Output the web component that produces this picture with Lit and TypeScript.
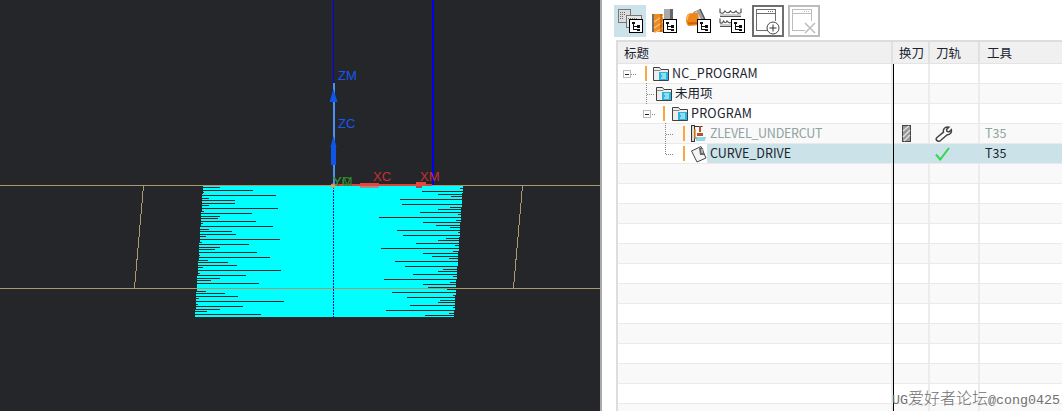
import { LitElement, html, css, svg } from "lit";
import { customElement } from "lit/decorators.js";

const leftLines: [number, number][] = [[37,270],[46,369],[51,222],[61,438],[70,237],[76,315],[85,315],[91,237],[100,444],[109,222],[115,366],[124,270],[130,264],[139,378],[145,219],[154,429],[163,237],[169,306],[178,318],[184,228],[193,450],[202,216],[208,357],[217,270],[223,255],[232,381],[241,210],[247,420],[256,234],[262,294],[271,321],[277,219],[286,453],[295,210],[301,348],[310,270],[316,243],[325,387],[349,228],[355,285],[364,324],[370,207],[379,462],[388,204],[394,339],[403,270],[409,231],[418,393]];
const rightLines: [number, number][] = [[40,390],[49,276],[58,324],[64,363],[73,210],[88,216],[97,360],[103,324],[112,270],[118,384],[127,147],[136,378],[142,279],[151,318],[157,360],[166,201],[172,384],[181,219],[190,348],[196,324],[205,258],[211,375],[220,153],[229,369],[235,279],[244,306],[250,357],[259,195],[274,225],[283,339],[289,324],[298,249],[304,369],[313,162],[322,360],[328,279],[337,294],[343,351],[352,186],[361,369],[367,231],[376,330],[382,324],[391,240],[397,369],[406,168],[415,357],[421,285]];

const leftEdge = (y: number) => Math.floor(203 - ((y - 186) * 8.5) / 131);
const rightEdge = (y: number) => Math.ceil(463 - ((y - 186) * 9) / 131);

const scan = svg`
  ${leftLines.map(([zy, zx]) => {
    const y = 175 + Math.round(zy / 3);
    const x0 = leftEdge(y);
    return svg`<rect x=${x0} y=${y} width=${130 + zx / 3 - x0} height="1" fill="#2b2528"/>`;
  })}
  ${rightLines.map(([zy, zx]) => {
    const y = 175 + Math.round(zy / 3);
    const x0 = 330 + zx / 3;
    return svg`<rect x=${x0} y=${y} width=${rightEdge(y) - x0} height="1" fill="#2b2528"/>`;
  })}
`;

const viewport = html`<svg class="scene" width="600" height="411" viewBox="0 0 600 411">
  <g shape-rendering="crispEdges">
    <polygon points="203,186 463,186 454,317 195,317" fill="#00ffff"/>
    ${scan}
    <rect x="0" y="185" width="600" height="1" fill="#a89a6e"/>
    <rect x="0" y="288" width="600" height="1" fill="#a89a6e"/>
    <line x1="143.5" y1="186" x2="134.5" y2="288" stroke="#a89a6e"/>
    <line x1="522.5" y1="186" x2="513.5" y2="288" stroke="#a89a6e"/>
    <line x1="333.5" y1="187" x2="333.5" y2="317" stroke="#0000e0" stroke-dasharray="2 1"/>
    <rect x="432" y="0" width="2" height="185" fill="#0000f0"/>
    <rect x="333" y="0" width="1" height="83" fill="#0000ff"/>
    <rect x="333" y="83" width="2" height="102" fill="#4a8ff2"/>
    <rect x="331" y="145" width="5" height="20" fill="#0f55e8"/>
    <rect x="333" y="184" width="99" height="2" fill="#d64538"/>
    <rect x="360" y="186" width="19" height="2" fill="#b08a8a"/>
    <rect x="360" y="183" width="19" height="3" fill="#e0483f"/>
    <rect x="416" y="186" width="6" height="2" fill="#b04a44"/>
    <rect x="416" y="182" width="10" height="4" fill="#e24840"/>
  </g>
  <polygon points="333.5,89 337.500,102 329.500,102" fill="#0f55e8"/>
  <polygon points="333.5,136 336.500,147 330.500,147" fill="#0f55e8"/>
  <text class="axis" x="338" y="80" fill="#1558f0">ZM</text>
  <text class="axis" x="338" y="128" fill="#1558f0">ZC</text>
  <text class="axis" x="373" y="181" fill="#c83030">XC</text>
  <text class="axis" x="420" y="181" fill="#c83030">XM</text>
  <text class="axis" x="333" y="186" fill="#2f8a30">YM</text>
  <text class="axis" x="333" y="186" fill="#2f8a30">YC</text>
  <circle cx="333" cy="186" r="2.500" fill="#b9b56a" opacity=".85"/>
</svg>`;

const badge = svg`<g shape-rendering="crispEdges">
  <rect x="15.500" y="14.500" width="13" height="13" fill="#fff" stroke="#000" stroke-width="1.300"/>
  <path d="M19.500 18v7M19.500 21.500h4M19.500 24.500h4" stroke="#111" fill="none"/>
  <rect x="18" y="17" width="3" height="2" fill="#111"/>
  <rect x="23" y="20" width="3" height="3" fill="#111"/>
  <rect x="23" y="23.500" width="3" height="2.500" fill="#111"/>
</g>`;

const icon = (body: unknown, w = 32) => html`<svg width=${w} height="32" viewBox="0 0 32 32">${body}</svg>`;

const ico1 = icon(svg`
  <g shape-rendering="crispEdges">
    <rect x="4.500" y="4.500" width="12" height="13" fill="#dcdcdc" stroke="#777"/>
    <path d="M6 7h1M8 7h1M10 7h1M6 9h1M8 9h1M10 9h1M6 11h1M8 11h1M6 13h1M8 13h1" stroke="#666"/>
    <rect x="12.500" y="10.500" width="15" height="12" fill="#e6e6e6" stroke="#777"/>
    <path d="M14 13h9" stroke="#777" stroke-dasharray="1 1"/>
  </g>${badge}`);

const ico2 = icon(svg`
  <rect x="16" y="4" width="9" height="11" fill="#a8a8a8"/>
  <rect x="22" y="4" width="3" height="10" fill="#666"/>
  <rect x="4" y="9" width="11" height="18" fill="#ef8a1d"/>
  <rect x="4" y="9" width="2" height="18" fill="#7a6f66"/>
  <path d="M6 17l9-6M6 23l9-6M6 28l9-5" stroke="#f7c58a" stroke-width="1.200" fill="none"/>
  <path d="M13 9v18" stroke="#c8600a" stroke-width="1.500"/>
  ${badge}`);

const ico3 = icon(svg`
  <path d="M11 7l7-3 6 14-4 7z" fill="#a0a0a0"/>
  <path d="M18 4l6.500 14-4 7" fill="none" stroke="#555" stroke-width="1.500"/>
  <path d="M14 7l6 12" stroke="#e6e6e6" stroke-width="2"/>
  <path d="M7.500 8.500L16 7.500 17.500 20 7.500 21C3 21 3 8.500 7.500 8.500z" fill="#f08518"/>
  <path d="M7 9.500C5.500 11 5 13.500 5.200 15" fill="none" stroke="#fbb566" stroke-width="1.500"/>
  <path d="M6 18.500l10-.5" stroke="#c8650c" stroke-width="2"/>
  ${badge}`);

const ico4 = icon(svg`
  <rect x="4" y="9" width="21" height="2" fill="#ccc"/>
  <path d="M4 3.500v4q3 2 5 -1.500q2.500 3.500 5.500 0q2.500 3.500 5.500 0q2 3.500 5 1.500v-4" fill="none" stroke="#555" stroke-width="1.200"/>
  <path d="M4 11.500h21" stroke="#555"/>
  <rect x="4" y="19" width="11" height="2" fill="#ccc"/>
  <path d="M4 13.500v4q2 2 3.500 -1.500q2 3.500 3.500 0q1.500 2.500 4 1.500" fill="none" stroke="#555" stroke-width="1.200"/>
  <path d="M4 21.500h11" stroke="#555"/>
  ${badge}`);

const windowIcon = (c: string, extra: unknown) => icon(svg`
  <rect x="1" y="1" width="30" height="30" fill="none" stroke=${c} stroke-width="2" shape-rendering="crispEdges"/>
  <g shape-rendering="crispEdges" fill="none" stroke=${c}>
    <path d="M16.500 25.500H4.500V4.500H23.500V15.500"/>
    <path d="M5 8.500H23"/>
    <path d="M16 6.500h1M18 6.500h1M20 6.500h1"/>
  </g>
  ${extra}`);

const ico5 = windowIcon("#6e6e6e", svg`
  <circle cx="21" cy="23" r="6" fill="#fff" stroke="#444"/>
  <path d="M21 19.500v7M17.500 23h7" stroke="#333"/>`);
const ico6 = windowIcon("#bdbdbd", svg`
  <path d="M17 18l10 10M27 18l-10 10" stroke="#bdbdbd" stroke-width="1.500"/>`);

const folder = html`<svg class="ti" width="16" height="15" viewBox="0 0 16 15">
  <path d="M.5 14.500V1.500h6l1.500 2h7.500v11z" fill="#ededed" stroke="#3f3f3f"/>
  <path d="M1 4.500h6.500" stroke="#888"/>
  <rect x="6" y="6" width="9" height="8" fill="#29b6e0"/>
  <path d="M8 8h5M9 10h4M8 12h5" stroke="#fff"/>
</svg>`;

const opIcon = html`<svg class="ti" width="16" height="18" viewBox="0 0 16 18">
  <path d="M3.500 1.500h8" fill="none" stroke="#333"/>
  <rect x=".5" y=".5" width="3" height="16" fill="#ddd" stroke="#333"/>
  <path d="M4 4v9h2" fill="none" stroke="#ef8a1d" stroke-width="1.500"/>
  <path d="M9 1v6" stroke="#b5522a" stroke-width="2"/>
  <path d="M6 8h6v3H6z" fill="#b5522a"/>
  <path d="M4 13h11M5 15h9" stroke="#29b6e0"/>
</svg>`;

const driveIcon = html`<svg class="ti" width="16" height="18" viewBox="0 0 16 18">
  <path d="M.5 6L10 1.500 15 13 6 17z" fill="#f4f4f4" stroke="#444"/>
  <path d="M8 3h4l1 7H9z" fill="#666"/>
  <path d="M10 5h2M10 7h2" stroke="#eee"/>
</svg>`;

const toolIcon = html`<svg width="9" height="17" viewBox="0 0 9 17">
  <rect x=".5" y=".5" width="8" height="16" fill="#999" stroke="#444"/>
  <path d="M1 6l6-5M1 12L8 5M2 16l6-6" stroke="#ddd" stroke-width="1.500"/>
</svg>`;

const wrench = html`<svg width="18" height="16" viewBox="0 0 18 16">
  <path d="M2 11.500L8.500 6.200C7.800 3.500 9.500 1 12.500 1L13.800 1.200 11.500 3.500 12 5.500 14 6 16.300 3.700C17 6.500 15 9 12.200 8.800L5 15C3.800 15.800 1.500 14.800 1.200 13.500 1 12.800 1.500 12 2 11.500Z" fill="#fff" stroke="#444" stroke-width="1.500"/>
</svg>`;

const check = html`<svg width="15" height="14" viewBox="0 0 15 14">
  <path d="M1 7.500L5.200 12.500 14 1" fill="none" stroke="#2fd84a" stroke-width="2"/>
</svg>`;

interface Row { label: string; pad: number; bar: number; icon: unknown; cls?: string; t?: string; a?: unknown; b?: unknown; }

const rows: Row[] = [
  { label: "NC_PROGRAM", pad: 35, bar: 27, icon: folder, cls: "wide" },
  { label: "未用项", pad: 38, bar: -1, icon: folder },
  { label: "PROGRAM", pad: 54, bar: 45, icon: folder, cls: "wide" },
  { label: "ZLEVEL_UNDERCUT", pad: 73, bar: 65, icon: opIcon, cls: "dim", t: "T35", a: toolIcon, b: wrench },
  { label: "CURVE_DRIVE", pad: 73, bar: 65, icon: driveIcon, cls: "sel", t: "T35", b: check },
];

const connectors = html`<svg class="tree" width="90" height="110" viewBox="618 64 90 110">
  <g shape-rendering="crispEdges" fill="none">
    <path d="M631 74.500h6M646.500 83v21M647 94.500h8M650 114.500h6M665.500 123v31M666 134.500h8M666 154.500h8" stroke="#888" stroke-dasharray="1 1"/>
    <rect x="623.500" y="70.500" width="7" height="7" fill="#fff" stroke="#bbb"/>
    <path d="M625 74.500h4" stroke="#222"/>
    <rect x="643.500" y="110.500" width="7" height="7" fill="#fff" stroke="#bbb"/>
    <path d="M645 114.500h4" stroke="#222"/>
  </g>
</svg>`;

@customElement("app-root")
export class AppRoot extends LitElement {
  static styles = css`
    :host { display: block; width: 1062px; height: 411px; overflow: hidden; background: #fff; position: relative; font-family: "Noto Sans CJK SC", "Open Sans", sans-serif; font-size: 12.500px; color: #1a2430; }
    .app { display: grid; grid-template-columns: 600px 2px 1fr; height: 411px; }
    .view { background: #24262a; overflow: hidden; }
    .scene { display: block; }
    .axis { font: 13px "Liberation Sans", sans-serif; }
    .split { background: #aaa; }
    .panel { display: flex; flex-direction: column; min-width: 0; overflow: hidden; }
    .bar { display: flex; height: 40px; box-sizing: border-box; padding: 5px 0 3px 12px; gap: 2px; flex: none; }
    .btn { width: 32px; height: 32px; display: block; }
    .btn svg { display: block; }
    .btn.on { background: #cbe3e8; }
    .btn.sp { margin-left: 2px; }
    .grid { margin-left: 14px; border-left: 2px solid #ddd; border-top: 2px solid #ddd; position: relative; flex: 1; overflow: hidden; }
    .cols { display: grid; grid-template-columns: 275px 37px 50px 1fr; }
    .head { height: 21px; background: #f0f0f0; border-bottom: 1px solid #e4e4e4; line-height: 21px; }
    .head > div { padding-left: 7px; border-right: 2px solid #e0e0e0; box-sizing: border-box; }
    .head > div:first-child { padding-left: 6px; }
    .head > div:nth-child(2) { padding-left: 6px; }
    .head > div:nth-child(3) { padding-left: 6px; }
    .head > div:last-child { border-right: 0; }
    .row { height: 19px; border-bottom: 1px solid #eaeaea; background: #fff; line-height: 17px; }
    .row.odd { background: #f9f9f9; }
    .row > div { border-right: 2px solid #ececec; box-sizing: border-box; display: flex; align-items: center; min-width: 0; height: 19px; }
    .row > .tool { padding: 0 0 2px 5px; border-right: 0; }
    .row > .swap { padding-left: 9px; }
    .row > .path { padding-left: 5px; }
    .row.dim { color: #8fa3a0; }
    .row.dim .lbl { letter-spacing: -.27px; }
    .row.wide .lbl { letter-spacing: .25px; }
    .title { position: relative; }
    .title .ti { flex: none; margin-right: 3px; display: block; }
    .title .lbl { flex: 1; height: 19px; }
    .mark { position: absolute; top: 2px; width: 2px; height: 15px; background: #f8a840; }
    .row.sel > div { border-right-color: #cbe3e8; }
    .row.sel > div:not(.title) { background: #cbe3e8; }
    .row.sel .lbl { background: #cbe3e8; margin-left: -3px; padding-left: 3px; }
    .tree { position: absolute; left: 0; top: 22px; pointer-events: none; }
    .rule { position: absolute; left: 275px; top: 22px; bottom: 0; width: 1px; background: #000; }
    .mark-wm { position: absolute; right: 2px; bottom: 0; line-height: 21px; font-size: 16px; color: #707070; white-space: nowrap; font-family: "Noto Sans CJK SC", sans-serif; font-weight: 300; }
    .mark-wm span { font-family: "Liberation Mono", monospace; font-size: 13.330px; }
  `;

  private renderRow(r: Row, i: number) {
    const cls = `row cols ${i % 2 ? "odd" : ""} ${r.cls ?? ""}`;
    return html`<div class=${cls}>
      <div class="title" style="padding-left:${r.pad}px">
        ${r.bar >= 0 ? html`<i class="mark" style="left:${r.bar}px"></i>` : ""}
        ${r.icon}<span class="lbl">${r.label}</span>
      </div>
      <div class="swap">${r.a ?? ""}</div>
      <div class="path">${r.b ?? ""}</div>
      <div class="tool">${r.t ?? ""}</div>
    </div>`;
  }

  render() {
    const all: Row[] = [...rows, ...Array.from({ length: 13 }, () => ({ label: "", pad: 0, bar: -1, icon: "" }))];
    return html`<div class="app">
        <div class="view">${viewport}</div>
        <div class="split"></div>
        <div class="panel">
          <div class="bar">
            <span class="btn on">${ico1}</span>
            <span class="btn">${ico2}</span>
            <span class="btn">${ico3}</span>
            <span class="btn">${ico4}</span>
            <span class="btn sp">${ico5}</span>
            <span class="btn sp">${ico6}</span>
          </div>
          <div class="grid">
            <div class="cols head"><div>标题</div><div>换刀</div><div>刀轨</div><div>工具</div></div>
            ${all.map((r, i) => this.renderRow(r, i))}
            ${connectors}
            <div class="rule"></div>
          </div>
        </div>
      </div>
      <div class="mark-wm"><span>UG</span>爱好者论坛<span>@cong0425</span></div>`;
  }
}
